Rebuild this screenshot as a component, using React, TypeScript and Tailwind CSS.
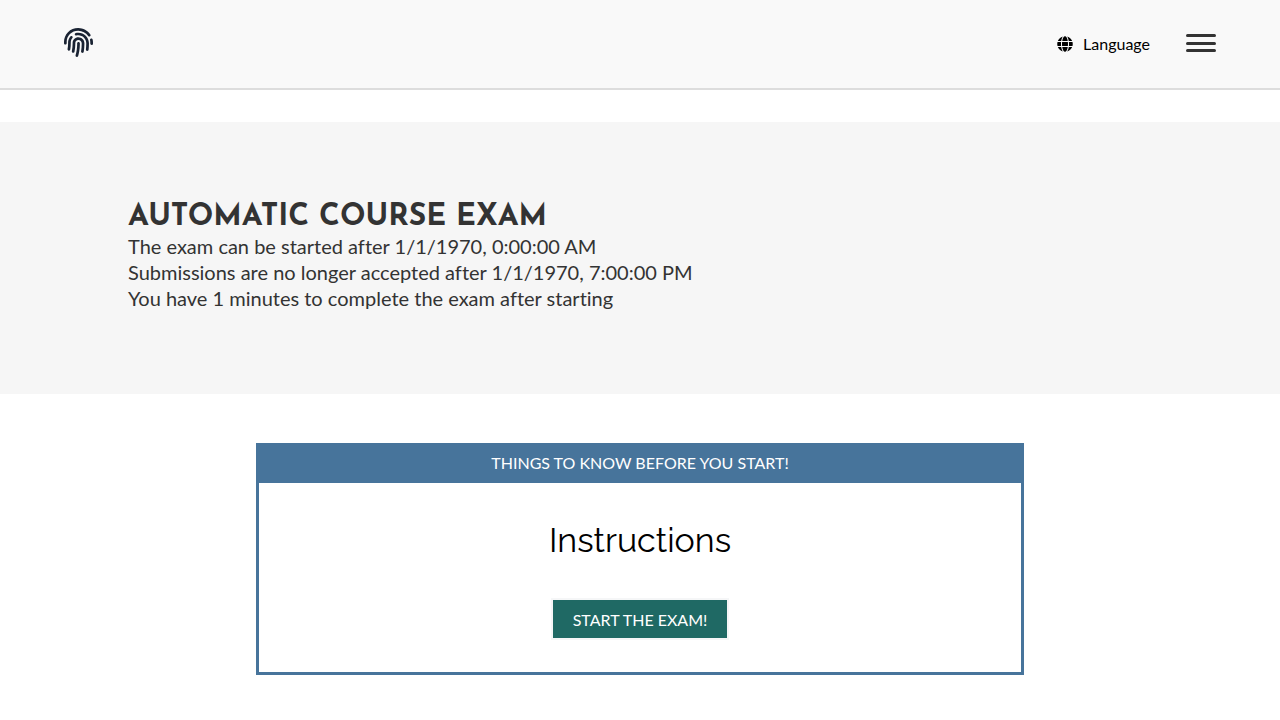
import { FaFingerprint, FaGlobe } from "react-icons/fa";

function Header() {
  return (
    <header className="flex h-[90px] items-start justify-between border-b-2 border-[#dddddd] bg-[#f9f9f9] px-16">
      <a href="/" aria-label="Home" className="mt-7 text-[#1a2333]">
        <FaFingerprint size={29} />
      </a>
      <nav className="mt-8 flex items-center gap-9">
        <button type="button" className="flex items-center gap-[10px] text-base text-black">
          <FaGlobe size={16} />
          <span>Language</span>
        </button>
        <button type="button" aria-label="Open menu" className="flex h-5 flex-col justify-between pb-[2px]">
          <span className="h-[3px] w-[30px] rounded-sm bg-[#333333]" />
          <span className="h-[3px] w-[30px] rounded-sm bg-[#333333]" />
          <span className="h-[3px] w-[30px] rounded-sm bg-[#333333]" />
        </button>
      </nav>
    </header>
  );
}

function ExamSummary() {
  return (
    <section className="mt-8 bg-[#f6f6f6] px-32 pt-[81px] pb-[83px] text-xl leading-[26px] text-[#333333]">
      <h1 className="font-['Josefin_Sans',Lato,sans-serif] text-[30px] leading-[30px] font-bold uppercase">
        Automatic Course Exam
      </h1>
      <p>The exam can be started after 1/1/1970, 0:00:00 AM</p>
      <p>Submissions are no longer accepted after 1/1/1970, 7:00:00 PM</p>
      <p>You have 1 minutes to complete the exam after starting</p>
    </section>
  );
}

function Instructions() {
  return (
    <section className="mx-auto mt-[49px] w-3/5 border-[3px] border-[#47749b] text-center">
      <h2 className="bg-[#47749b] pt-[5px] pb-2 text-base text-white uppercase">
        Things to know before you start!
      </h2>
      <div className="flex flex-col items-center py-8">
        <h3 className="font-[Raleway,Lato,sans-serif] text-[34px] leading-[50px] text-black">
          Instructions
        </h3>
        <button
          type="button"
          className="mt-[33px] border-2 border-[#f5f6f7] bg-[#1f6964] px-5 pt-2 pb-[6px] text-base text-white uppercase"
        >
          Start the exam!
        </button>
      </div>
    </section>
  );
}

export default function App() {
  return (
    <div className="bg-white font-[Lato,sans-serif] [font-variant-ligatures:none]">
      <Header />
      <main>
        <ExamSummary />
        <Instructions />
      </main>
    </div>
  );
}
